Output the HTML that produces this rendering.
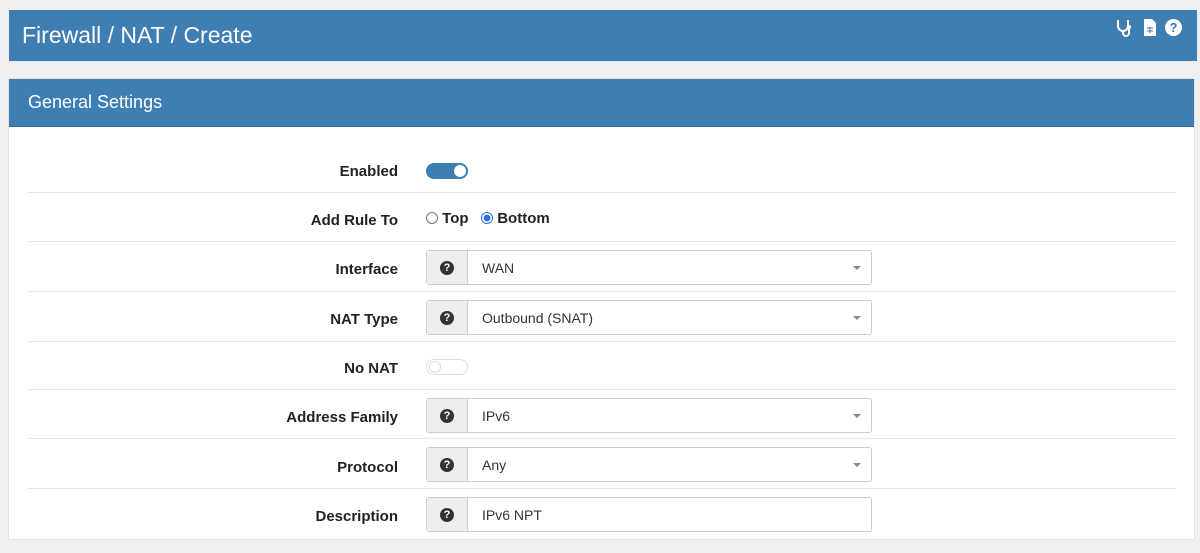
<!DOCTYPE html>
<html><head><style>
body{margin:0;width:1200px;height:553px;background:#efeff0;font-family:"Liberation Sans",Arial,sans-serif;position:relative;overflow:hidden}
.top{position:absolute;left:9px;top:10px;width:1188px;height:51px;background:#3e7eb3;color:#fff}
.top h1{margin:0;position:absolute;left:13px;top:12px;font-size:23px;font-weight:normal}
.panel{position:absolute;left:8px;top:78px;width:1187px;height:462px;background:#fff;border:1px solid #e2e2e2;box-sizing:border-box}
.ph{position:absolute;left:0;top:0;right:0;height:47px;background:#3e7eb3;color:#fff;border-bottom:1px solid #2f6a9b}
.ph span{position:absolute;left:19px;top:13px;font-size:18px}
.row{position:absolute;left:19px;width:1148px;border-top:1px solid #e5e5e5}
.lbl{position:absolute;right:796px;font-weight:bold;font-size:15px;color:#222;margin-top:1px}
.grp{position:absolute;left:417px;width:446px;height:35px;border:1px solid #ccc;border-radius:3px;box-sizing:border-box;background:#fff}
.add{position:absolute;left:0;top:0;width:40px;height:33px;background:#eee;border-right:1px solid #ccc}
.q{position:absolute;left:13px;top:10px;width:14px;height:14px;border-radius:50%;background:#333;color:#fff;font-size:11px;font-weight:bold;text-align:center;line-height:14px}
.val{position:absolute;left:55px;top:9px;font-size:14px;color:#333}
.car{position:absolute;right:10px;top:15px;width:0;height:0;border-left:4px solid transparent;border-right:4px solid transparent;border-top:4px solid #888}
.tog{position:absolute;left:417px;width:42px;height:16px;border-radius:8px;box-sizing:border-box}
</style></head><body>
<div class="top"><h1>Firewall / NAT / Create</h1>
<svg style="position:absolute;left:1107px;top:9px" width="20" height="18" viewBox="0 0 20 18"><path d="M2 1v6a5 5 0 0 0 10 0V1M7 12v2a3 3 0 0 0 6 0v-4" fill="none" stroke="#fff" stroke-width="2"/><circle cx="13" cy="8" r="2" fill="#fff"/></svg>
<svg style="position:absolute;left:1134px;top:9px" width="14" height="17" viewBox="0 0 14 17"><path d="M1 0h8l4 4v13H1z" fill="#fff"/><path d="M4 9h6M4 12h6M7 8v6" stroke="#3e7eb3" stroke-width="1"/></svg>
<div style="position:absolute;left:1156px;top:9px;width:17px;height:17px;border-radius:50%;background:#fff;color:#3e7eb3;font-weight:bold;font-size:13px;text-align:center;line-height:17px">?</div>
</div>
<div class="panel"><div class="ph"><span>General Settings</span></div>
<div class="lbl" style="top:83px">Enabled</div>
<div class="tog" style="top:84px;background:#3e7eb3"><div style="position:absolute;right:2px;top:2px;width:12px;height:12px;border-radius:50%;background:#fff"></div></div>
<div class="row" style="top:113px"></div>
<div class="lbl" style="top:132px">Add Rule To</div>
<div style="position:absolute;left:417px;top:131px;font-size:15px;font-weight:bold;color:#222"><span style="display:inline-block;width:10px;height:10px;border:1px solid #777;border-radius:50%;vertical-align:-1px"></span> Top &nbsp;&nbsp;<span style="display:inline-block;width:10px;height:10px;border:1px solid #2a6ff0;border-radius:50%;vertical-align:-1px;background:radial-gradient(#2a6ff0 45%,#fff 50%)"></span> Bottom</div>
<div class="row" style="top:162px"></div>
<div class="lbl" style="top:181px">Interface</div>
<div class="grp" style="top:171px"><div class="add"><div class="q">?</div></div><div class="val">WAN</div><div class="car"></div></div>
<div class="row" style="top:212px"></div>
<div class="lbl" style="top:231px">NAT Type</div>
<div class="grp" style="top:221px"><div class="add"><div class="q">?</div></div><div class="val">Outbound (SNAT)</div><div class="car"></div></div>
<div class="row" style="top:262px"></div>
<div class="lbl" style="top:280px">No NAT</div>
<div class="tog" style="top:280px;border:1px solid #ddd;background:#fff"><div style="position:absolute;left:2px;top:1px;width:12px;height:12px;border-radius:50%;border:1px solid #ddd;box-sizing:border-box"></div></div>
<div class="row" style="top:310px"></div>
<div class="lbl" style="top:329px">Address Family</div>
<div class="grp" style="top:319px"><div class="add"><div class="q">?</div></div><div class="val">IPv6</div><div class="car"></div></div>
<div class="row" style="top:359px"></div>
<div class="lbl" style="top:379px">Protocol</div>
<div class="grp" style="top:368px"><div class="add"><div class="q">?</div></div><div class="val">Any</div><div class="car"></div></div>
<div class="row" style="top:409px"></div>
<div class="lbl" style="top:428px">Description</div>
<div class="grp" style="top:418px"><div class="add"><div class="q">?</div></div><div class="val">IPv6 NPT</div></div>
</div>
</body></html>
